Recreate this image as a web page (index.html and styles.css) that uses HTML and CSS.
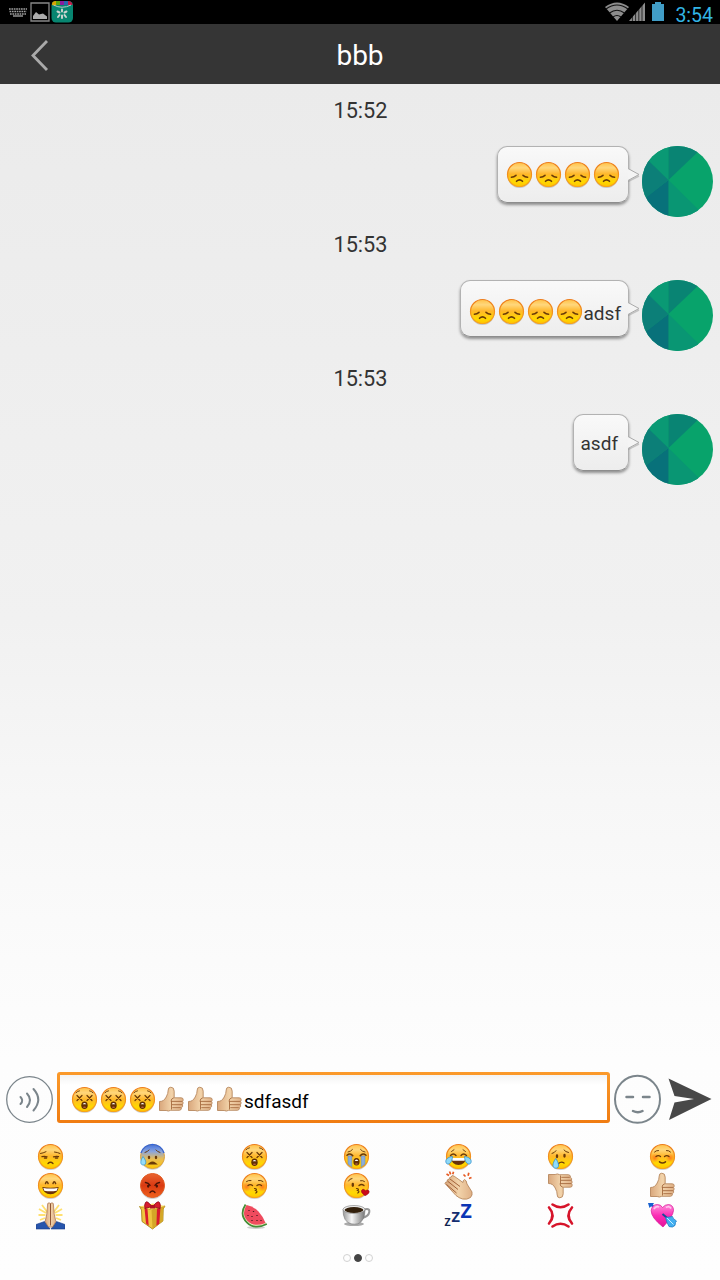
FILE: index.html
```html
<!DOCTYPE html>
<html lang="en">
<head>
<meta charset="utf-8">
<title>bbb</title>
<link rel="stylesheet" href="styles.css">
</head>
<body>
<svg class="sprite" width="0" height="0" aria-hidden="true">
  <defs>
    <linearGradient id="gold" x1="0" y1="0" x2="0" y2="1"><stop offset="0" stop-color="#ffc247"/><stop offset=".22" stop-color="#ffd77c"/><stop offset=".48" stop-color="#ffb72b"/><stop offset=".8" stop-color="#ffd800"/><stop offset="1" stop-color="#ffc400"/></linearGradient>
    <linearGradient id="rim" x1="0" y1="0" x2="0" y2="1"><stop offset="0" stop-color="#ed7d1d"/><stop offset="1" stop-color="#f7a51c"/></linearGradient>
    <linearGradient id="cold" x1="0" y1="0" x2="0" y2="1"><stop offset="0" stop-color="#4272e0"/><stop offset=".3" stop-color="#8ba5dc"/><stop offset=".6" stop-color="#e9bd55"/><stop offset="1" stop-color="#ffc800"/></linearGradient>
    <linearGradient id="rage" x1="0" y1="0" x2="0" y2="1"><stop offset="0" stop-color="#e96532"/><stop offset=".5" stop-color="#da3a12"/><stop offset="1" stop-color="#f0621c"/></linearGradient>
    <linearGradient id="skin" x1="0" y1="0" x2="1" y2="0"><stop offset="0" stop-color="#d9a77c"/><stop offset=".5" stop-color="#f2d3aa"/><stop offset="1" stop-color="#dfb086"/></linearGradient>
    <linearGradient id="pink" x1="0" y1="0" x2="0" y2="1"><stop offset="0" stop-color="#ff8fdc"/><stop offset=".5" stop-color="#fb2db4"/><stop offset="1" stop-color="#e3129a"/></linearGradient>
    <linearGradient id="china" x1="0" y1="0" x2="1" y2="0"><stop offset="0" stop-color="#999"/><stop offset=".4" stop-color="#f7f7f7"/><stop offset="1" stop-color="#777"/></linearGradient>
    <radialGradient id="blush"><stop offset="0" stop-color="#ff6a1c" stop-opacity=".8"/><stop offset="1" stop-color="#ff7a1c" stop-opacity="0"/></radialGradient>

    <symbol id="face" viewBox="0 0 29 29">
      <ellipse cx="14.5" cy="16" rx="12" ry="12" fill="#777" opacity=".35"/>
      <circle cx="14.5" cy="14.5" r="12" fill="url(#gold)" stroke="url(#rim)" stroke-width="1.2"/>
    </symbol>
    <symbol id="sad" viewBox="0 0 29 29">
      <use href="#face"/>
      <g class="ink"><path d="M6.400 17.200q2.600-.2 4.600-1.900M18 15.300q2 1.700 4.600 1.900" stroke-width="1.600"/><path d="M11.500 21.300q3-3 6 0" stroke-width="1.600"/></g>
    </symbol>
    <symbol id="dizzy" viewBox="0 0 29 29">
      <use href="#face"/>
      <g class="ink"><path d="M7 10.500l5 5M12 10.500l-5 5M17 10.500l5 5M22 10.500l-5 5" stroke-width="1.200"/><path d="M6 7.800q1.500-1.700 3.500-2M19.500 5.800q2 .3 3.500 2" stroke-width=".9"/></g>
      <ellipse cx="14.500" cy="20.200" rx="3.200" ry="3.800" fill="#633004"/><path d="M12.700 19.300q1.800-2.800 3.600 0z" fill="#fff"/><ellipse cx="14.500" cy="22.300" rx="1.500" ry=".8" fill="#b9633f"/>
    </symbol>
    <symbol id="unamused" viewBox="0 0 29 29">
      <use href="#face"/>
      <g class="ink"><path d="M6 14.600q3-.7 5 .2M17.500 14.800q3-.9 5-.2"/><path d="M8.500 16h2M19.500 16h2" stroke-width="1.500"/><path d="M4.500 11.500q2.500-.3 5.500-1.800M18.500 10q3 .3 5.500 1.500" stroke-width="1"/><path d="M12 21.500q2.500-2.500 5 0"/></g>
    </symbol>
    <symbol id="anxious" viewBox="0 0 29 29">
      <ellipse cx="14.500" cy="15.800" rx="12" ry="12" fill="#777" opacity=".35"/>
      <circle cx="14.500" cy="14.500" r="12" fill="url(#cold)" stroke="#e0a53c" stroke-width="1"/>
      <path d="M3 11A12 12 0 0 1 26 11" fill="none" stroke="#3566d8" stroke-width="1.400"/>
      <g class="ink"><path d="M7 10.500q3-.8 4-2.500M18 8q1 1.700 4 2.500" stroke-width="1"/><path d="M11 14.800v1.300M18 14.800v1.300" stroke-width="2.300"/><path d="M12 21.500q2.500-2 5 0z" stroke-width="2"/></g>
      <path d="M5 14.500c-3 4.500-3 8.500.4 8.500s3.300-4 -.4-8.500z" fill="#96dcf7" stroke="#3a9bd4" stroke-width=".8"/>
    </symbol>
    <symbol id="sob" viewBox="0 0 29 29">
      <use href="#face"/>
      <path d="M6 14h3.800v11l-3.800-3zM19.200 14h3.800v8l-3.800 3z" fill="#8caed9" stroke="#6a8fc4" stroke-width=".6"/>
      <g class="ink"><path d="M5 13.200q3-2.800 5.800.5M18.200 13.700q2.800-3.300 5.800-.5" stroke-width="1.500"/><path d="M6 10q3-.5 4.500-2.500M18.500 7.500q1.500 2 4.500 2.500" stroke-width=".9"/></g>
      <ellipse cx="14.500" cy="19.800" rx="3.100" ry="3.800" fill="#633004"/><path d="M12.700 18.900q1.800-2.800 3.600 0z" fill="#fff"/><ellipse cx="14.500" cy="22" rx="1.500" ry=".8" fill="#b9633f"/>
    </symbol>
    <symbol id="joy" viewBox="0 0 29 29">
      <use href="#face"/>
      <path d="M7 16h15q-1 7-7.500 7t-7.500-7z" fill="#67320b"/><path d="M7.600 16h13.800l-.8 2.800h-12.200z" fill="#fff"/>
      <g class="ink"><path d="M6.500 13.500q3-3 5.500 0M17 13.500q2.500-3 5.500 0" stroke-width="1.400"/><path d="M7.500 9.500l2.500-1.800M19 7.700l2.500 1.800" stroke-width=".9"/></g>
      <path d="M8.500 14.500C4 15 1 17.500 2 20.500s6 2 6.500-6zM20.500 14.500c4.500.5 7.500 3 6.500 6s-6 2-6.500-6z" fill="#8dd9f8" stroke="#348fca" stroke-width=".8"/>
    </symbol>
    <symbol id="cry" viewBox="0 0 29 29">
      <use href="#face"/>
      <g class="ink"><path d="M11 13.500v1.500M18.500 13v1.500" stroke-width="2.300"/><path d="M6 11.500q2.500-.5 4-2.800M18 8q1.500 2 4.500 2.500" stroke-width="1"/><path d="M12.500 21.500q2.800-2.500 5.500-.5"/></g>
      <path d="M9.700 16.500c-3.500 5-3.800 9.500 0 9.700s3.700-4.700 0-9.700z" fill="#8fdcfb" stroke="#348fca" stroke-width=".8"/>
    </symbol>
    <symbol id="blushing" viewBox="0 0 29 29">
      <use href="#face"/><circle cx="6.800" cy="16" r="4.500" fill="url(#blush)"/><circle cx="22.200" cy="16" r="4.500" fill="url(#blush)"/>
      <g class="ink"><path d="M8 14.500q2.300-1.800 4.500 0M16.500 14.500q2.300-1.800 4.500 0"/><path d="M6.500 10q1.500-1.700 4-1.500M18.500 8.500q2.500-.2 4 1.500" stroke-width="1"/><path d="M11.500 19.800q3 2.500 6 0" stroke-width="1.500"/></g>
    </symbol>
    <symbol id="grin" viewBox="0 0 29 29">
      <use href="#face"/>
      <path d="M6.300 16q8.200 1.500 16.400 0q-1 7.200-8.200 7.200t-8.200-7.200z" fill="#6a320b"/><path d="M7.300 17q7.200 1.200 14.400 0l-1 2.800q-6.200 1-12.400 0z" fill="#fff"/>
      <g class="ink"><path d="M9.500 12.500q1.200-3.700 2.600 0M17 12.500q1.200-3.700 2.600 0" stroke-width="1.500"/></g>
    </symbol>
    <symbol id="angry" viewBox="0 0 29 29">
      <ellipse cx="14.500" cy="16" rx="12" ry="12" fill="#777" opacity=".35"/>
      <circle cx="14.500" cy="14.500" r="12" fill="url(#rage)" stroke="#e25a20" stroke-width="1"/>
      <g class="ink dark"><path d="M7.500 11.500q3 .5 4.500 2.800M21.500 11.500q-3 .5-4.500 2.800" stroke-width="1.500"/><path d="M10.200 14.800v.8M18.800 14.800v.8" stroke-width="2.300"/><path d="M12 21.500q2.500-3 5 0"/></g>
    </symbol>
    <symbol id="kissing" viewBox="0 0 29 29">
      <use href="#face"/><circle cx="6.500" cy="16" r="4.800" fill="url(#blush)"/><circle cx="22.500" cy="16" r="4.800" fill="url(#blush)"/>
      <g class="ink"><path d="M8 14.500q2.300-1.800 4.500 0M17 14.500q2.300-1.800 4.500 0"/><path d="M6.500 10.500q2-1.500 4.500-1M18.500 9.500q2.500-.5 4.500 1" stroke-width="1"/><path d="M14.500 17.500q3.300.3 1 2 2.700 1 .3 2.500" stroke-width="1.200"/></g>
    </symbol>
    <symbol id="kiss-heart" viewBox="0 0 29 29">
      <use href="#face"/>
      <g class="ink"><path d="M10.800 13v1.800" stroke-width="2.300"/><path d="M17 14.500q2.500-2 5 0"/><path d="M6.500 10q1-2.300 3.500-2.500M18.500 9.700q2.500-.5 4 .8" stroke-width="1"/><path d="M14.500 17.500q3.300.3 1 2 2.700 1 .3 2.500" stroke-width="1.200"/></g>
      <path d="M23 24.800c-2-2-4.500-3.500-3.300-5.600 1-1.700 3-.7 3.800.6 1.300-1.200 3.700-1 3.700 1 0 2-2.200 2.800-4.200 4z" fill="#cb0b1b" stroke="#8d0914" stroke-width=".5"/>
    </symbol>
    <symbol id="thumb" viewBox="0 0 29 29">
      <path d="M2.500 16.500q4.500 0 6.700-4.500 2-3.500 2-7 0-2.800 2.600-2.800 3.400 0 3.400 4v6.600h7q2 0 2 1.900 0 1-.6 1.700 1.200 1.300-.1 3.300.7 1.900-.9 2.900 0 2.600-2.200 2.700h-8.700q-2.500 1.400-4.500.2H2.500z" fill="url(#skin)" stroke="#b07d52" stroke-width=".8"/>
      <path d="M16.800 12.800q-2.800.7-2.800 3.600M14.500 16.400h10.700M15 19.700h10.200M15.300 22.700h8.500M14.500 16v8.500" fill="none" stroke="#a5693d" stroke-width=".9"/>
    </symbol>
    <symbol id="clap" viewBox="0 0 29 29">
      <path d="M1 12.500q.5-2 2.200-1.500Q2.500 8 5 8.500 5 6 7.200 6q.5-2.500 3-.8L19 11.500q0-2.500 1.500-3 2 .5 2.500 4.500l5 8q.8 3-1.500 5.500-3.500 2.500-8 1.500-3.500-1-6.500-3.500Z" fill="url(#skin)" stroke="#b07d52" stroke-width=".8"/>
      <path d="M2.500 13.500l10 8.500M4 10.500l10 8M6 8l10 7.500" fill="none" stroke="#9b572e" stroke-width=".9"/>
      <path d="M2.500 3l2.500 1.500M5.500.5l1.200 2.800M9.500.8l-.7 2.500M19.500 3.500l2 2M24.800 1.800l-.7 3M27.500 6.500l-2.500 1" fill="none" stroke="#e65a22" stroke-width="1.700"/>
    </symbol>
    <symbol id="pray" viewBox="0 0 29 29">
      <path d="M6 4l6 8M3 8l7 4M2.500 14h7M4 19l5-2M23 4l-6 8M26 8l-7 4M26.500 14h-7M25 19l-5-2" stroke="#ffe070" stroke-width="1.800"/>
      <path d="M0 28v-4.500l8.500-3 5.500 7.500zM29 28v-4.500l-8.500-3L15 28z" fill="#2755ac" stroke="#173b86" stroke-width=".6"/>
      <path d="M11.700 2.500q1.200-1.400 2.800 0 1.600-1.400 2.800 0l.9 10.500 1.700 7.500-3.300 5.500h-4.200l-3.300-5.500L10.800 13z" fill="url(#skin)" stroke="#a76e49" stroke-width=".7"/><path d="M14.500 2.500v22" stroke="#8f5534"/>
    </symbol>
    <symbol id="gift" viewBox="0 0 29 29">
      <path d="M1.500 5.500l12 3 13.500-3.500-1.800 3-.3 12L14.500 28 4 20.500 3.500 9z" fill="#efc640" stroke="#9d7b0c" stroke-width=".8"/><path d="M13.500 8.500l1 19.500 10.400-8 .3-12L27 5z" fill="#d4a727"/>
      <path d="M6.500 7l1.500 15.500 2.700 2.200L9.500 8zM22.500 6.800l-1.300 16-2.800 2L19 7.800z" fill="#d91c2c"/>
      <path d="M1.500 5.500l13.500-3L27 5 13.500 8.500z" fill="#ffdf68"/>
      <path d="M14 5.500Q9-1 7.500 1.500T7 7.500zM14.500 5.500Q20-1 21.500 1.500t.5 6z" fill="#d71b2d" stroke="#8b0918" stroke-width=".8"/><path d="M12 4h5v3.500h-5z" fill="#b01223"/>
    </symbol>
    <symbol id="melon" viewBox="0 0 29 29">
      <ellipse cx="16" cy="26.500" rx="9" ry="1.500" fill="#888" opacity=".4"/>
      <path d="M5.500 3.500Q-1 13 6.500 21T26.800 23L24 19.500 7.500 4.500z" fill="#eef3c4"/>
      <path d="M6.500 4q7 1 12 6.500t7 11.500Q14 26.500 7.500 20T6.500 4z" fill="#ef4b5e"/>
      <path d="M5.500 3.500Q-1 13.500 6.800 21.300T26.800 23" fill="none" stroke="#448c37" stroke-width="1.700"/>
      <path d="M9 9v1M13.500 10v1M8 14v1M12 15v1M17 14v1M12 19v1M17 19v1M21 19v1" stroke="#4b1b20" stroke-width="1.300"/>
    </symbol>
    <symbol id="coffee" viewBox="0 0 29 29">
      <ellipse cx="12" cy="23" rx="10" ry="2" fill="#555" opacity=".5"/>
      <path d="M21 9q7-2.500 6.300 2T20 17" fill="none" stroke="#969696" stroke-width="2"/><path d="M1 8.500q0 12.500 8 14.300 3.500.8 7 0 7-3 7-14.300z" fill="url(#china)" stroke="#777" stroke-width=".6"/>
      <ellipse cx="12" cy="8.500" rx="11" ry="4" fill="#eee" stroke="#888" stroke-width=".7"/><ellipse cx="12" cy="9" rx="9.400" ry="2.900" fill="#33200c"/>
    </symbol>
    <symbol id="sleep" viewBox="0 0 29 29">
      <g class="zed"><text x=".6" y="24.500" font-size="10.500" fill="#102451">Z</text><text x="7.500" y="21" font-size="14.500" fill="#142e70">Z</text><text x="16.500" y="16.500" font-size="19.500" fill="#0c35b4">Z</text></g>
    </symbol>
    <symbol id="anger" viewBox="0 0 29 29">
      <path d="M6.500 3.500q8 5.500 16 0M3 6.500q7 8 0 16M26 6.500q-7 8 0 16M6.500 25.500q8-5.500 16 0" fill="none" stroke="#d6142a" stroke-width="2.600" stroke-linecap="round"/>
    </symbol>
    <symbol id="cupid" viewBox="0 0 29 29">
      <path d="M0 2h6l-1 1.700 3 3-1.800 1.600-3-3L1.500 7z" fill="#175fcf"/>
      <path d="M15 26Q3 16.500 3.200 9.500 4 3.500 9.300 3.500q3.700 0 5.200 3 2.500-3 6-3 5 .5 5 6Q25 15.500 15 26z" fill="url(#pink)" stroke="#d80e94" stroke-width=".7"/>
      <path d="M6 8q2-3.500 5-2M18 6.500q3-2 5 1" fill="none" stroke="#ffc7ef" stroke-width="1.600"/>
      <path d="M14.500 13l7 6" stroke="#174d98" stroke-width="2"/><path d="M17.500 16.500l7-1q0 2 4 4.500l-1 1.500q.5 3.500-3 4.500-1.500 0-3.500-.5-2.500-4-3.500-9z" fill="#42aef0" stroke="#1976bb" stroke-width=".7"/><path d="M19 17l6.500 6.500" stroke="#c7f0ff"/>
    </symbol>
    <symbol id="avatar" viewBox="0 0 71 71">
      <clipPath id="disc"><circle cx="35.500" cy="35.500" r="35.500"/></clipPath>
      <g clip-path="url(#disc)"><path fill="#08a36b" d="M0 0h71v71H0z"/><path fill="#099673" d="M26.500 34V71H64z"/><path fill="#08717a" d="M26.500 34V71H0V54z"/><path fill="#0c7f78" d="M26.500 34L0 55V8z"/><path fill="#0a9974" d="M26.500 34L0 8V0h26.500z"/><path fill="#098473" d="M26.500 34V0H62z"/></g>
    </symbol>
    <symbol id="tail" viewBox="0 0 12 16">
      <path d="M0 14.500L11 9" stroke="#999" stroke-opacity=".5" stroke-width="1.500"/><path d="M0 1.500L11 7.500 0 13.500" fill="#f4f4f4" stroke="#aaa" stroke-width="1"/>
    </symbol>
  </defs>
</svg>
<div class="screen">
  <header class="status">
    <svg class="status-left" width="76" height="24" viewBox="0 0 76 24">
      <g stroke="#a0a0a0" stroke-width="1.700" stroke-dasharray="1.700 .7"><path d="M9 9h18M9.500 11.500h17M10 14h16"/></g><path d="M13 16h10" stroke="#aaa" stroke-width="1.300"/>
      <path d="M31 3h18v18H31z" fill="none" stroke="#888" stroke-width="1.300"/><path d="M33 19v-3l3-4 3 2.500 4-1 4 3V19z" fill="#ababab"/>
      <rect x="51.500" y="1" width="21.500" height="21.500" rx="4.500" fill="#078570"/><path d="M52 6V4q0-3 4-3v4z" fill="#d8a400"/><path d="M56 1h4v4h-4z" fill="#5aa312"/><path d="M60 1h4v4h-4z" fill="#8b1c9c"/><path d="M64 1h4v4h-4z" fill="#2766ad"/><path d="M68 1q4 0 4.500 4H68z" fill="#c31848"/><path d="M52 5q10 4.500 20.500 0v2q-10 2-20.500 0z" fill="#078570"/><path d="M53.500 5q8.500 4.500 17.500 0" fill="none" stroke="#b7cac5" stroke-width="1"/>
      <g stroke="#c9d3cf" stroke-width="2" stroke-linecap="round"><path d="M62 9.500v2M62 15.500v2.500M57.500 11.500l2 1M64.500 12.500l2-1M58 17l1.500-2M64.500 15l1.500 2"/></g>
    </svg>
    <div class="status-right">
      <svg width="64" height="24" viewBox="0 0 64 24">
        <path d="M15 21L3 7q12-9 24 0z" fill="#8d8d8d"/><path d="M4 9q11-8 22 0M7.500 13q7.500-5.500 15 0M11 17q4-3 8 0" fill="none" stroke="#111" stroke-width="1.200"/>
        <path d="M27 21L43 2.500V21z" fill="#8d8d8d"/><path d="M30.400 3v18M33.600 3v18M36.800 3v18M40 3v18" stroke="#000" stroke-width=".7"/>
        <path d="M50 4h3V2h6v2h3v17H50z" fill="#419dc6"/>
      </svg>
      <span class="clock">3:54</span>
    </div>
  </header>
  <nav class="topbar">
    <svg class="back" width="24" height="34" viewBox="0 0 24 34"><path d="M18 3L4 17.500 18 32" fill="none" stroke="#aaa" stroke-width="2.800"/></svg>
    <h1 class="title">bbb</h1>
  </nav>
  <main class="chat">
    <div class="time">15:52</div>
    <div class="message"><div class="bubble bubble-icons"><svg class="emoji"><use href="#sad"/></svg><svg class="emoji"><use href="#sad"/></svg><svg class="emoji"><use href="#sad"/></svg><svg class="emoji"><use href="#sad"/></svg><svg class="tail"><use href="#tail"/></svg></div><svg class="avatar"><use href="#avatar"/></svg></div>
    <div class="time">15:53</div>
    <div class="message"><div class="bubble bubble-mixed"><svg class="emoji"><use href="#sad"/></svg><svg class="emoji"><use href="#sad"/></svg><svg class="emoji"><use href="#sad"/></svg><svg class="emoji"><use href="#sad"/></svg><span>adsf</span><svg class="tail"><use href="#tail"/></svg></div><svg class="avatar"><use href="#avatar"/></svg></div>
    <div class="time">15:53</div>
    <div class="message"><div class="bubble"><span>asdf</span><svg class="tail"><use href="#tail"/></svg></div><svg class="avatar"><use href="#avatar"/></svg></div>
  </main>
  <section class="composer">
    <svg class="round" width="48" height="48" viewBox="0 0 48 48" fill="none" stroke="#7b858b"><circle cx="24.500" cy="24.500" r="22.800" stroke-width="1.300"/><g stroke-width="2" stroke-linecap="round"><path d="M15.500 22q3.500 3.500 0 7M22 18.500q6 6.500 0 13.500M28.500 14q9.500 10.500 0 21.500"/></g></svg>
    <div class="field"><svg class="emoji"><use href="#dizzy"/></svg><svg class="emoji"><use href="#dizzy"/></svg><svg class="emoji"><use href="#dizzy"/></svg><svg class="emoji"><use href="#thumb"/></svg><svg class="emoji"><use href="#thumb"/></svg><svg class="emoji"><use href="#thumb"/></svg><span>sdfasdf</span></div>
    <svg class="smile" width="48" height="50" viewBox="0 0 48 50" fill="none" stroke="#7b858b"><ellipse cx="23.500" cy="25.300" rx="22.500" ry="23.500" stroke-width="2"/><path d="M12.500 23h6.500M29 23h6.500M19 37q5 2.500 9.500 0" stroke-width="2.500" stroke-linecap="round"/></svg>
    <svg class="send" width="46" height="44" viewBox="0 0 46 44"><path d="M1.500 1.500L44.500 22 2 43l5.500-17.500L27 22 7.500 19z" fill="#484848"/></svg>
  </section>
  <section class="picker">
    <div class="grid">
      <svg class="emoji"><use href="#unamused"/></svg><svg class="emoji"><use href="#anxious"/></svg><svg class="emoji"><use href="#dizzy"/></svg><svg class="emoji"><use href="#sob"/></svg><svg class="emoji"><use href="#joy"/></svg><svg class="emoji"><use href="#cry"/></svg><svg class="emoji"><use href="#blushing"/></svg>
      <svg class="emoji"><use href="#grin"/></svg><svg class="emoji"><use href="#angry"/></svg><svg class="emoji"><use href="#kissing"/></svg><svg class="emoji"><use href="#kiss-heart"/></svg><svg class="emoji"><use href="#clap"/></svg><svg class="emoji flip"><use href="#thumb"/></svg><svg class="emoji"><use href="#thumb"/></svg>
      <svg class="emoji"><use href="#pray"/></svg><svg class="emoji"><use href="#gift"/></svg><svg class="emoji"><use href="#melon"/></svg><svg class="emoji"><use href="#coffee"/></svg><svg class="emoji"><use href="#sleep"/></svg><svg class="emoji"><use href="#anger"/></svg><svg class="emoji"><use href="#cupid"/></svg>
    </div>
    <div class="dots"><i class="dot"></i><i class="dot active"></i><i class="dot"></i></div>
  </section>
</div>
</body>
</html>
```

FILE: styles.css
```css
* { box-sizing: border-box; }
body { margin: 0; font-family: Roboto, "Noto Sans", sans-serif; }
svg { display: block; flex: none; }
.sprite { position: absolute; }
.ink { fill: none; stroke: #693a08; stroke-width: 1.3; stroke-linecap: round; }
.dark { stroke: #4a1407; }
.zed { font-family: "Noto Sans", sans-serif; font-weight: 700; }
.emoji { width: 29px; height: 29px; }
.flip { transform: scaleY(-1); }
.screen { width: 720px; height: 1280px; display: flex; flex-direction: column; overflow: hidden; background: linear-gradient(#ebebeb 84px, #efefef 440px, #f1f1f1 620px, #f7f7f7 800px, #fbfbfb 960px, #fdfdfd 1060px, #fefefe); }
.status { height: 24px; flex: none; display: flex; justify-content: space-between; background: #000; }
.status-right { display: flex; padding-right: 7px; gap: 9px; }
.clock { color: #33b5e5; font-size: 19.5px; line-height: 31px; }
.topbar { height: 60px; flex: none; display: grid; grid-template-columns: 60px 1fr 60px; align-items: center; background: #353535; }
.back { margin: -1px 0 0 29px; }
.title { margin: 0; color: #fff; font-size: 28px; font-weight: 400; line-height: 60px; text-align: center; padding-top: 2px; }
.chat { flex: 1; }
.time { height: 62px; padding: 13px 0 0 1px; color: #333; font-size: 21.7px; line-height: 28px; text-align: center; }
.message { height: 72px; display: flex; justify-content: flex-end; align-items: flex-start; padding-right: 7px; gap: 13px; }
.bubble { position: relative; display: flex; align-items: center; height: 57px; padding: 3px 10px 0 7px; border: 1px solid #b2b2b2; border-bottom-color: #8d8d8d; border-radius: 10px; background: linear-gradient(#f9f9f9, #ededed); box-shadow: 0 2px 3px rgba(0, 0, 0, .4); color: #333; font-size: 19px; line-height: 24px; }
.bubble-icons { padding: 0 7px 0 7px; }
.bubble-mixed { padding: 6px 7px 0; }
.bubble-mixed span { padding-top: 5px; }
.tail { position: absolute; right: -12px; top: 20px; width: 12px; height: 16px; }
.avatar { width: 71px; height: 71px; }
.composer { height: 68px; flex: none; display: flex; align-items: flex-start; }
.round { margin: 3px 4px 0 5px; }
.field { width: 553px; height: 51px; display: flex; align-items: center; padding: 4px 10px 0; border: 3px solid transparent; border-radius: 3px; background: linear-gradient(#f3f3f3, #fff 10px) padding-box, linear-gradient(#fb9a2b, #f07c11) border-box; color: #000; font-size: 19px; }
.field span { padding-top: 3px; }
.smile { margin: 2px 0 0 4px; }
.send { margin: 5px 0 0 5px; }
.picker { height: 140px; flex: none; display: flex; flex-direction: column; align-items: center; justify-content: space-between; padding: 2px 0 18px; }
.grid { width: 714px; margin-right: 7px; display: grid; grid-template-columns: repeat(7, 102px); grid-auto-rows: 29.3px; justify-items: center; }
.dots { display: flex; gap: 3px; margin-right: 5px; }
.dot { width: 8px; height: 8px; border: 1px solid #d2d2d2; border-radius: 50%; }
.active { background: #444; border-color: #444; }
```
